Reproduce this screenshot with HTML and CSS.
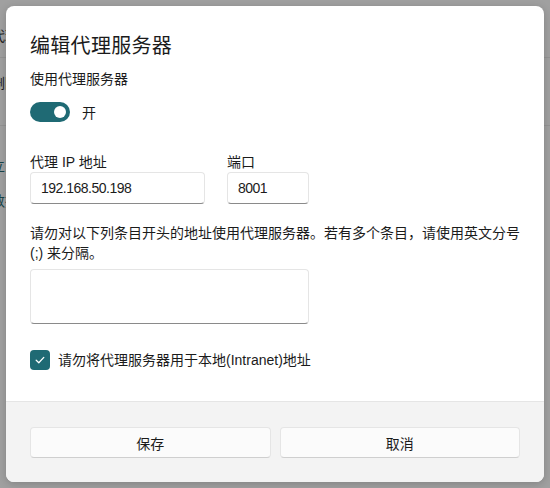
FILE: index.html
```html
<!DOCTYPE html>
<html lang="zh-CN">
<head>
<meta charset="utf-8">
<link rel="stylesheet" href="styles.css">
</head>
<body>
<div class="backdrop">
  <div class="bg-row bg-row-a"><span class="bg-text">代理</span></div>
  <div class="bg-row bg-row-b"><span class="bg-text">删除</span></div>
  <div class="bg-row bg-row-c">
    <span class="bg-text teal">立即</span>
    <span class="bg-text teal">数据</span>
  </div>
</div>
<div class="dialog">
  <div class="dialog-body">
    <h1 class="title">编辑代理服务器</h1>
    <div class="label">使用代理服务器</div>
    <div class="toggle-row">
      <span class="toggle"><span class="knob"></span></span>
      <span class="toggle-text">开</span>
    </div>
    <div class="fields">
      <div class="field field-ip">
        <div class="label">代理 IP 地址</div>
        <div class="input">192.168.50.198</div>
      </div>
      <div class="field field-port">
        <div class="label">端口</div>
        <div class="input">8001</div>
      </div>
    </div>
    <p class="note">请勿对以下列条目开头的地址使用代理服务器。若有多个条目，请使用英文分号<br>(;) 来分隔。</p>
    <div class="textarea"></div>
    <div class="check-row">
      <span class="checkbox">
        <svg width="12" height="12" viewBox="0 0 12 12"><path d="M2.2 6.3 L4.8 8.7 L9.8 3.4" fill="none" stroke="#fff" stroke-width="1.3" stroke-linecap="round" stroke-linejoin="round"/></svg>
      </span>
      <span class="check-text">请勿将代理服务器用于本地(Intranet)地址</span>
    </div>
  </div>
  <div class="dialog-footer">
    <button class="btn">保存</button>
    <button class="btn">取消</button>
  </div>
</div>
</body>
</html>
```
FILE: styles.css
```css
* { box-sizing: border-box; }
html, body {
  margin: 0;
  padding: 0;
  width: 550px;
  height: 488px;
  overflow: hidden;
}
body {
  background: #a0a0a0;
  font-family: "Liberation Sans", "Noto Sans CJK SC", sans-serif;
  color: #1b1b1b;
  position: relative;
}
.backdrop {
  display: flex;
  flex-direction: column;
}
.bg-row {
  border-bottom: 1px solid #949494;
  position: relative;
  overflow: hidden;
}
.bg-row-a { height: 58px; }
.bg-row-b { height: 68px; }
.bg-row-c { height: 120px; border-bottom: none; }
.bg-text {
  position: absolute;
  left: -9px;
  font-family: "Noto Sans CJK SC", sans-serif;
  font-size: 14px;
  line-height: 20px;
  color: #1a1a1a;
}
.bg-row-a .bg-text { top: 25px; }
.bg-row-b .bg-text { top: 14px; }
.bg-row-c .bg-text:first-child { top: 29px; }
.bg-row-c .bg-text:last-child { top: 64px; }
.bg-text.teal { color: #17444a; }

.dialog {
  position: absolute;
  left: 6px;
  top: 6px;
  width: 538px;
  height: 476px;
  background: #ffffff;
  border-radius: 8px;
  overflow: hidden;
  display: flex;
  flex-direction: column;
  box-shadow: 0 2px 8px rgba(0,0,0,0.18);
}
.dialog-body {
  flex: 1;
  padding: 25px 24px 0 24px;
}
.title {
  margin: 0;
  font-size: 20px;
  line-height: 28px;
  font-weight: 400;
  font-family: "Noto Sans CJK SC", sans-serif;
  color: #1b1b1b;
  letter-spacing: 0.3px;
}
.label {
  font-size: 14px;
  line-height: 20px;
  font-family: "Liberation Sans", "Noto Sans CJK SC", sans-serif;
}
.title + .label { margin-top: 10px; }
.toggle-row {
  display: flex;
  align-items: center;
  margin-top: 13px;
  height: 20px;
}
.toggle {
  width: 40px;
  height: 20px;
  border-radius: 10px;
  background: #1f6a74;
  position: relative;
  display: inline-block;
}
.knob {
  position: absolute;
  right: 4px;
  top: 4px;
  width: 12px;
  height: 12px;
  border-radius: 50%;
  background: #fff;
}
.toggle-text {
  margin-left: 12px;
  font-size: 14px;
  line-height: 20px;
  font-family: "Noto Sans CJK SC", sans-serif;
}
.fields {
  display: flex;
  gap: 22px;
  margin-top: 30px;
}
.field-ip { width: 175px; }
.field-port { width: 82px; }
.input {
  height: 32px;
  border: 1px solid #e5e5e5;
  border-bottom: 1px solid #8a8a8a;
  border-radius: 4px;
  background: #fff;
  padding: 0 10px;
  font-family: "Liberation Sans", sans-serif;
  font-size: 14px;
  letter-spacing: -0.5px;
  line-height: 30px;
  color: #1b1b1b;
}
.note {
  margin: 19px 0 0 0;
  font-size: 14px;
  line-height: 20px;
}
.textarea {
  margin-top: 6px;
  width: 279px;
  height: 55px;
  border: 1px solid #e5e5e5;
  border-bottom: 1px solid #8a8a8a;
  border-radius: 4px;
  background: #fff;
}
.check-row {
  display: flex;
  align-items: center;
  margin-top: 26px;
  height: 20px;
}
.checkbox {
  width: 20px;
  height: 20px;
  border-radius: 4px;
  background: #1f6a74;
  display: flex;
  align-items: center;
  justify-content: center;
}
.check-text {
  margin-left: 8px;
  font-size: 14px;
  line-height: 20px;
}
.dialog-footer {
  height: 81px;
  background: #f3f3f3;
  border-top: 1px solid #e5e5e5;
  display: flex;
  gap: 9px;
  padding: 25px 24px 0 24px;
}
.btn {
  flex: 1;
  height: 31px;
  border: 1px solid #e5e5e5;
  border-bottom-color: #cfcfcf;
  border-radius: 4px;
  background: #fbfbfb;
  font-family: "Noto Sans CJK SC", sans-serif;
  font-size: 14px;
  color: #1b1b1b;
  padding: 0;
}
```
